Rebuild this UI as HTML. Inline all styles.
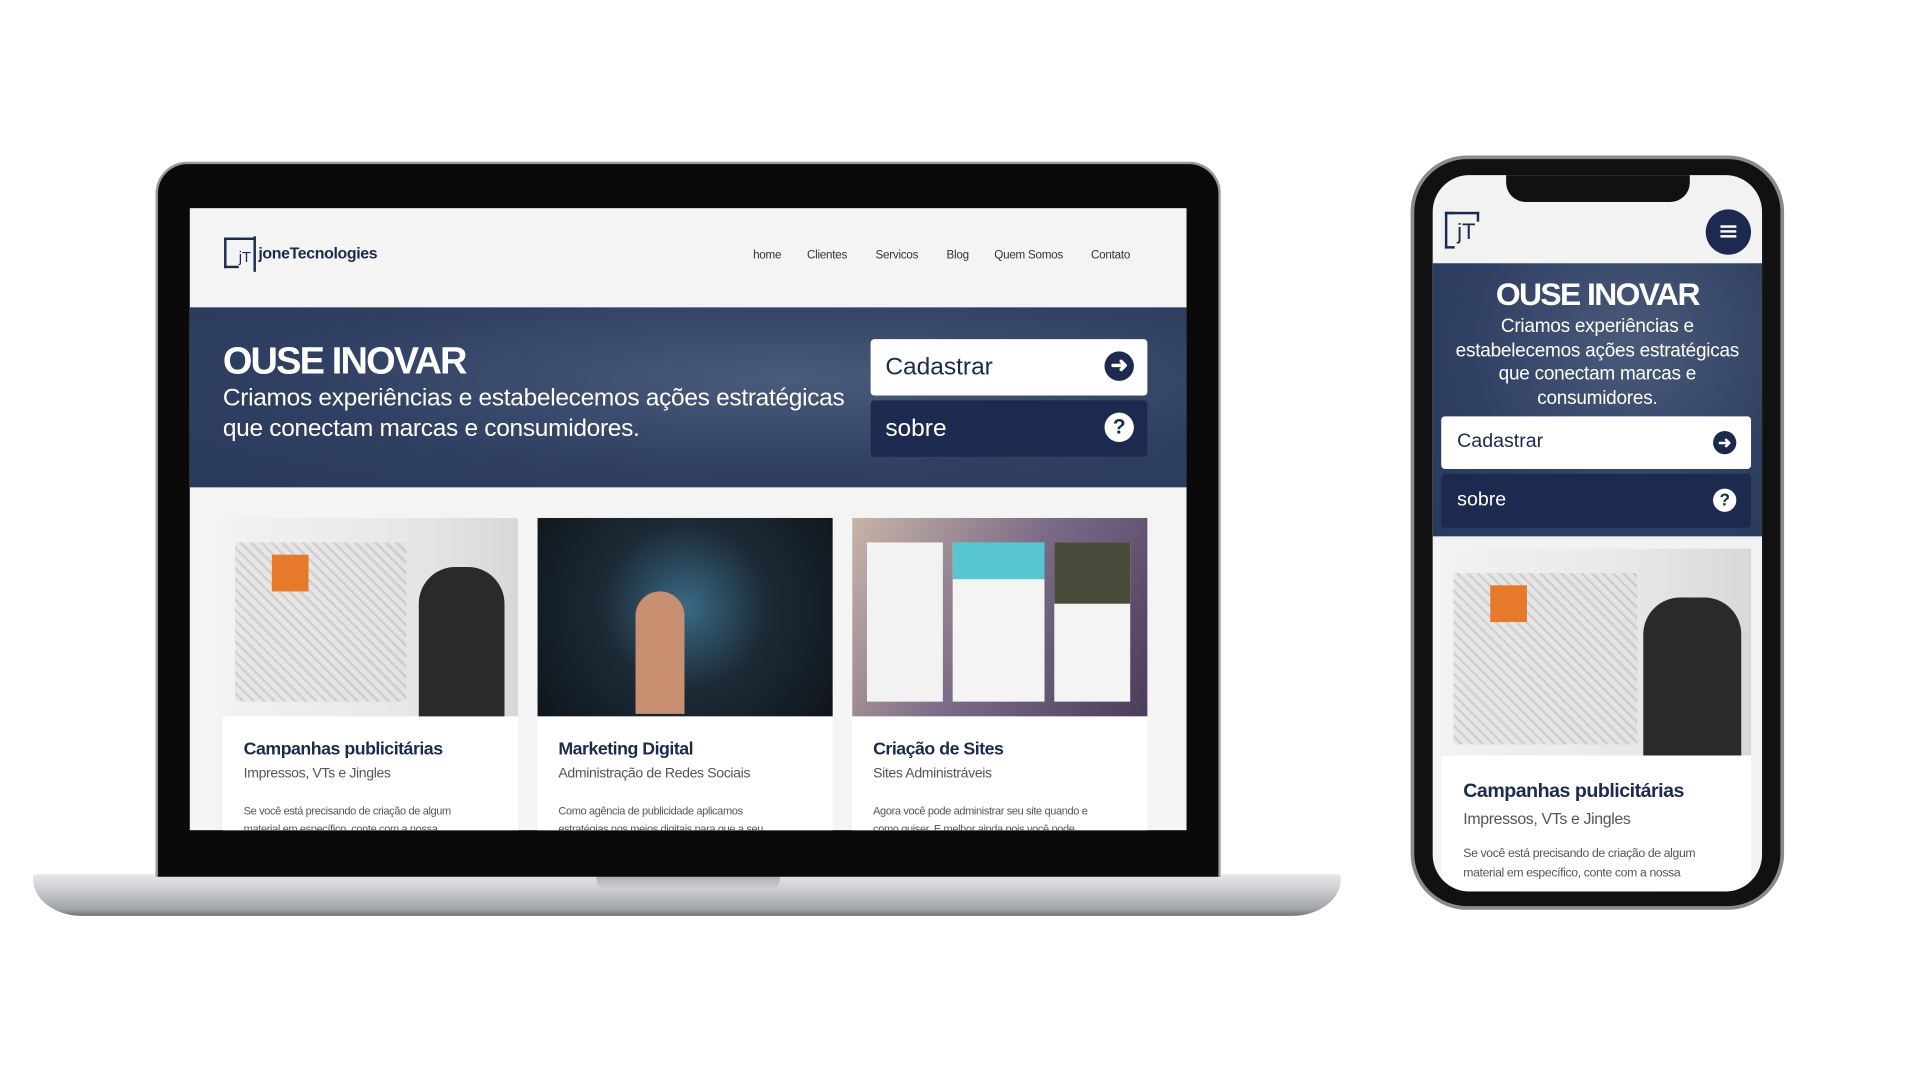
<!DOCTYPE html>
<html><head><meta charset="utf-8"><style>
*{margin:0;padding:0;box-sizing:border-box}
html,body{width:1920px;height:1080px;overflow:hidden;background:#fff;font-family:"Liberation Sans",sans-serif}
#w{position:absolute;left:0;top:0;width:1568px;height:882px;transform:scale(1.2245);transform-origin:0 0}
.a{position:absolute}
.nav span{position:absolute;font-size:9.5px;color:#333;letter-spacing:-0.2px}
.btnw{background:#fff;color:#1b2a4e;border-radius:3px}
.btnn{background:#1b2a4e;color:#fff;border-radius:3px}
.ic{position:absolute;border-radius:50%;font-weight:bold;text-align:center}
.card{position:absolute;background:#fff}
.t1{position:absolute;color:#1b2a4e;font-weight:bold;letter-spacing:-0.4px}
.t2{position:absolute;color:#555;letter-spacing:-0.3px}
.t3{position:absolute;color:#555;letter-spacing:-0.3px}
</style></head><body><div id="w">
<!-- laptop -->
<div class="a" style="left:27px;top:714px;width:1068px;height:34px;border-radius:2px 2px 40px 40px/2px 2px 30px 30px;background:linear-gradient(#e6e7e9,#c9cbce 40%,#9ea1a5 85%,#707276)"></div>
<div class="a" style="left:487px;top:714px;width:150px;height:13px;border-radius:0 0 10px 10px;background:linear-gradient(#a8aaad,#d0d2d4)"></div>
<div class="a" style="left:127px;top:132px;width:870px;height:584px;border-radius:26px 26px 0 0;background:#0a0a0a;border:2px solid #9a9a9a;border-bottom:none"></div>
<div class="a" style="left:155px;top:170px;width:814px;height:508px;background:#f4f4f4;overflow:hidden">
  <div class="a" style="left:28px;top:24px;width:12px;height:25px;border:2px solid #1b2a4e;border-right:none"></div>
  <div class="a" style="left:28px;top:24px;width:24px;height:2px;background:#1b2a4e"></div>
  <div class="a" style="left:52px;top:23px;width:2px;height:29px;background:#1b2a4e"></div>
  <div class="a" style="left:40px;top:33px;font-size:12px;color:#1b2a4e">jT</div>
  <div class="a" style="left:56px;top:29px;font-size:13px;font-weight:bold;color:#1b2a4e;letter-spacing:-0.3px">joneTecnologies</div>
  <div class="nav"><span style="left:460px;top:33px">home</span><span style="left:504px;top:33px">Clientes</span><span style="left:560px;top:33px">Servicos</span><span style="left:618px;top:33px">Blog</span><span style="left:657px;top:33px">Quem Somos</span><span style="left:736px;top:33px">Contato</span></div>
  <div class="a" style="left:0;top:81px;width:814px;height:147px;background:radial-gradient(ellipse at 60% 40%,#4a5a7a,#2f3f62 60%,#2a3a5c)"></div>
  <div class="a" style="left:27px;top:107px;font-size:31px;font-weight:bold;color:#fff;letter-spacing:-1.5px">OUSE INOVAR</div>
  <div class="a" style="left:27px;top:143px;font-size:20px;color:#fff;line-height:25px;letter-spacing:-0.25px">Criamos experiências e estabelecemos ações estratégicas<br>que conectam marcas e consumidores.</div>
  <div class="a btnw" style="left:556px;top:107px;width:226px;height:46px"><span class="a" style="left:12px;top:12px;font-size:20px">Cadastrar</span><span class="ic" style="left:191px;top:10px;width:24px;height:24px;background:#1b2a4e;color:#fff;font-size:17px;line-height:23px">➜</span></div>
  <div class="a btnn" style="left:556px;top:157px;width:226px;height:46px"><span class="a" style="left:12px;top:12px;font-size:20px">sobre</span><span class="ic" style="left:191px;top:10px;width:24px;height:24px;background:#fff;color:#1b2a4e;font-size:17px;line-height:24px">?</span></div>
  <div class="card" style="left:27px;top:253px;width:241px;height:260px"><div class="a" style="left:0;top:0;width:241px;height:162px;background:linear-gradient(90deg,#f2f2f2,#e8e8e8 60%,#d8d8d8)"></div><div class="a" style="left:160px;top:40px;width:70px;height:122px;background:#2a2a2a;border-radius:30px 30px 0 0"></div><div class="a" style="left:10px;top:20px;width:140px;height:130px;background:repeating-linear-gradient(45deg,#e0e0e0 0 4px,#bbb 4px 6px);opacity:.6"></div><div class="a" style="left:40px;top:30px;width:30px;height:30px;background:#e77a2a"></div><div class="t1" style="left:17px;top:181px;font-size:14.5px">Campanhas publicitárias</div><div class="t2" style="left:17px;top:203px;font-size:11.5px">Impressos, VTs e Jingles</div><div class="t3" style="left:17px;top:232px;font-size:9px;line-height:15px">Se você está precisando de criação de algum<br>material em específico, conte com a nossa</div></div>
  <div class="card" style="left:284px;top:253px;width:241px;height:260px"><div class="a" style="left:0;top:0;width:241px;height:162px;background:radial-gradient(circle at 50% 45%,#3a6a86,#1c2a36 45%,#0f151b)"></div><div class="a" style="left:80px;top:60px;width:40px;height:100px;background:#c89070;border-radius:20px 20px 0 0"></div><div class="t1" style="left:17px;top:181px;font-size:14.5px">Marketing Digital</div><div class="t2" style="left:17px;top:203px;font-size:11.5px">Administração de Redes Sociais</div><div class="t3" style="left:17px;top:232px;font-size:9px;line-height:15px">Como agência de publicidade aplicamos<br>estratégias nos meios digitais para que a seu</div></div>
  <div class="card" style="left:541px;top:253px;width:241px;height:260px"><div class="a" style="left:0;top:0;width:241px;height:162px;background:linear-gradient(120deg,#c9b4a8,#7a6a86 50%,#4a3d5a)"></div><div class="a" style="left:12px;top:20px;width:62px;height:130px;background:#f2f2f2"></div><div class="a" style="left:82px;top:20px;width:75px;height:130px;background:#f4f4f4;border-top:30px solid #57c6cf"></div><div class="a" style="left:165px;top:20px;width:62px;height:130px;background:#f4f4f4;border-top:50px solid #4a4a3a"></div><div class="t1" style="left:17px;top:181px;font-size:14.5px">Criação de Sites</div><div class="t2" style="left:17px;top:203px;font-size:11.5px">Sites Administráveis</div><div class="t3" style="left:17px;top:232px;font-size:9px;line-height:15px">Agora você pode administrar seu site quando e<br>como quiser. E melhor ainda pois você pode</div></div>
</div>
<!-- phone -->
<div class="a" style="left:1152px;top:127px;width:305px;height:616px;border-radius:46px;background:#111;border:3px solid #8a8a8a"></div>
<div class="a" style="left:1170px;top:143px;width:269px;height:585px;border-radius:30px;background:#f2f2f2;overflow:hidden">
  <div class="a" style="left:60px;top:-2px;width:150px;height:24px;background:#111;border-radius:0 0 16px 16px"></div>
  <div class="a" style="left:10px;top:30px;width:8px;height:30px;border:2px solid #1b2a4e;border-right:none"></div>
  <div class="a" style="left:10px;top:30px;width:28px;height:2px;background:#1b2a4e"></div>
  <div class="a" style="left:36px;top:30px;width:2px;height:8px;background:#1b2a4e"></div>
  <div class="a" style="left:20px;top:36px;font-size:18px;color:#1b2a4e">jT</div>
  <div class="a" style="left:223px;top:28px;width:37px;height:37px;border-radius:50%;background:#1b2a4e"><div class="a" style="left:12px;top:13px;width:13px;height:2px;background:#fff;box-shadow:0 4px 0 #fff,0 8px 0 #fff"></div></div>
  <div class="a" style="left:0;top:72px;width:269px;height:223px;background:radial-gradient(ellipse at 60% 30%,#4a5a7a,#2f3f62 60%,#2a3a5c)"></div>
  <div class="a" style="left:0;top:82px;width:269px;text-align:center;font-size:26px;font-weight:bold;color:#fff;letter-spacing:-1.3px">OUSE INOVAR</div>
  <div class="a" style="left:0;top:114px;width:269px;text-align:center;font-size:15.5px;color:#fff;line-height:19.5px;letter-spacing:-0.2px">Criamos experiências e<br>estabelecemos ações estratégicas<br>que conectam marcas e<br>consumidores.</div>
  <div class="a btnw" style="left:7px;top:197px;width:253px;height:43px"><span class="a" style="left:13px;top:12px;font-size:16px">Cadastrar</span><span class="ic" style="left:222px;top:12px;width:19px;height:19px;background:#1b2a4e;color:#fff;font-size:13px;line-height:19px">➜</span></div>
  <div class="a btnn" style="left:7px;top:244px;width:253px;height:44px"><span class="a" style="left:13px;top:13px;font-size:16px">sobre</span><span class="ic" style="left:222px;top:12px;width:19px;height:19px;background:#fff;color:#1b2a4e;font-size:14px;line-height:19px">?</span></div>
  <div class="card" style="left:7px;top:305px;width:253px;height:290px"><div class="a" style="left:0;top:0;width:253px;height:169px;background:linear-gradient(90deg,#f2f2f2,#e8e8e8 60%,#d8d8d8)"></div><div class="a" style="left:165px;top:40px;width:80px;height:129px;background:#2a2a2a;border-radius:30px 30px 0 0"></div><div class="a" style="left:10px;top:20px;width:150px;height:140px;background:repeating-linear-gradient(45deg,#e0e0e0 0 4px,#bbb 4px 6px);opacity:.6"></div><div class="a" style="left:40px;top:30px;width:30px;height:30px;background:#e77a2a"></div><div class="t1" style="left:18px;top:190px;font-size:16px">Campanhas publicitárias</div><div class="t2" style="left:18px;top:213px;font-size:13px">Impressos, VTs e Jingles</div><div class="t3" style="left:18px;top:242px;font-size:10px;line-height:16px">Se você está precisando de criação de algum<br>material em específico, conte com a nossa</div></div>
</div>
</div></body></html>
